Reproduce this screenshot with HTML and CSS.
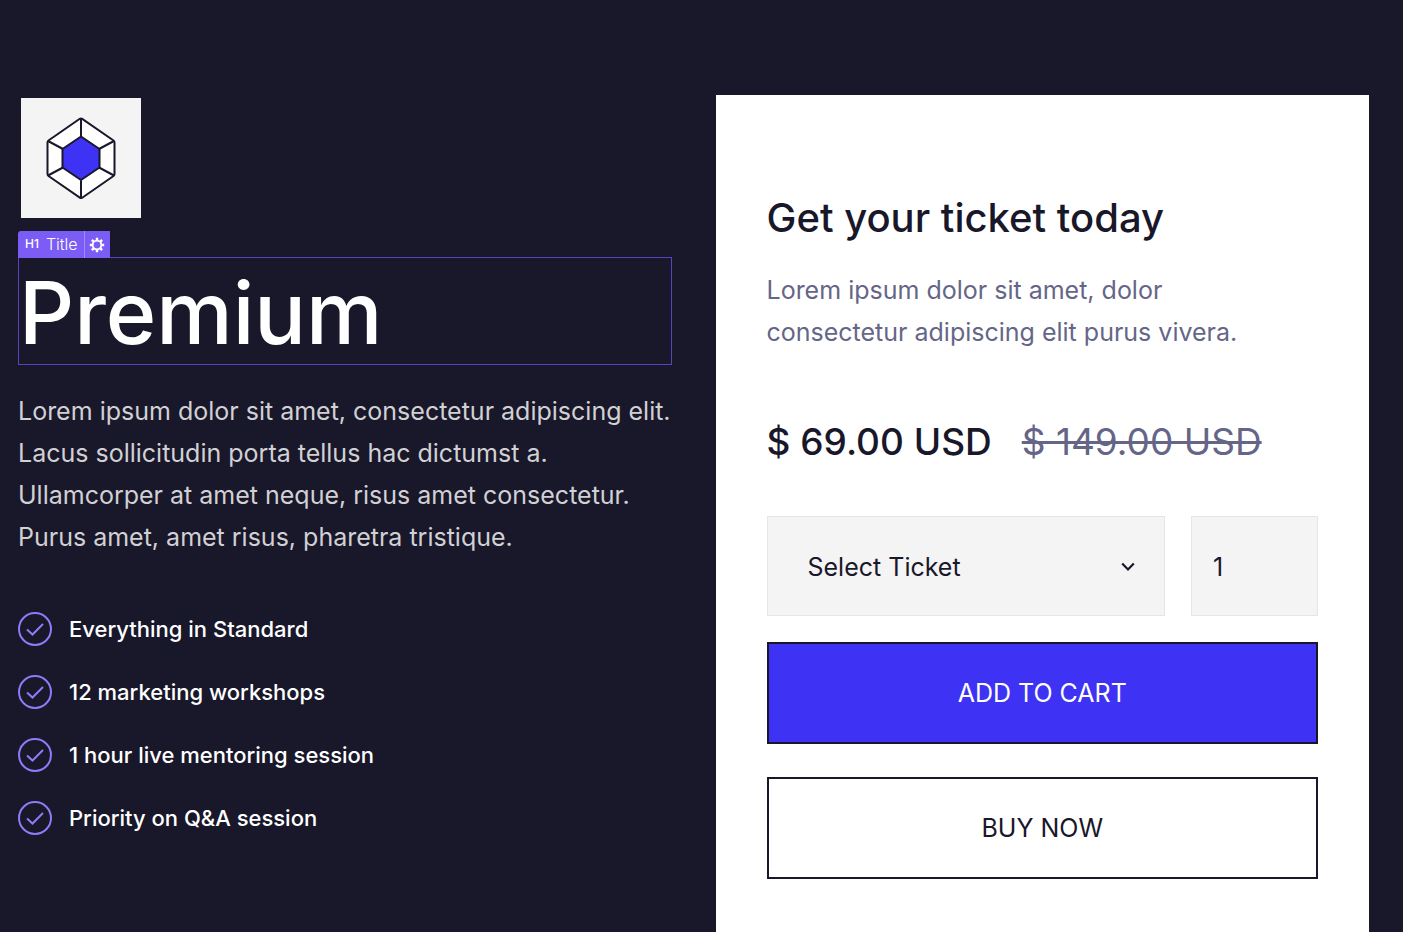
FILE: index.html
```html
<!DOCTYPE html>
<html lang="en">
  <head>
    <meta charset="UTF-8" />
    <meta name="viewport" content="width=device-width, initial-scale=1.0" />
    <title>Premium</title>
    <link rel="stylesheet" href="styles.css">
  </head>
  <body>
    <main class="ticket-page">
      <section class="plan">
        <div class="plan-logo">
          <svg width="72" height="84" viewBox="0 0 72 84" fill="none" stroke="#19172a" stroke-width="2" stroke-linejoin="round">
            <path d="M34.800 2.800Q36 2 37.200 2.800L68.500 24.500Q69.500 25.200 69.500 26.500V58Q69.500 59.300 68.500 60L37.200 81.700Q36 82.500 34.800 81.700L3.500 60Q2.500 59.300 2.500 58V26.500Q2.500 25.200 3.500 24.500Z" fill="#fff" />
            <path d="M36 2.500V20M69 25 54 33M69 59.500 54 51.500M36 82V64.500M3 59.500 18 51.500M3 25 18 33" />
            <path d="M36 20.500 54.500 33V51.500L36 64 17.500 51.500V33Z" fill="#3e32f5" />
          </svg>
        </div>

        <div class="selected">
          <div class="selected-tag">
            <span class="tag-name"><b class="tag-level">H1</b>Title</span>
            <button class="tag-settings" type="button" aria-label="Settings">
              <svg width="16" height="16" viewBox="0 0 16 16" fill="none" stroke="#fff">
                <circle cx="8" cy="8" r="4.300" stroke-width="1.800" />
                <path d="M8 .8V3.500M8 12.500V15.200M.8 8H3.500M12.500 8H15.200M2.900 2.900 4.800 4.800M11.200 11.200 13.100 13.100M2.900 13.100 4.800 11.200M11.200 4.800 13.100 2.900" stroke-width="2.400" />
              </svg>
            </button>
          </div>
          <h1 class="plan-title">Premium</h1>
        </div>

        <p class="plan-text">
          Lorem ipsum dolor sit amet, consectetur adipiscing elit.<br />
          Lacus sollicitudin porta tellus hac dictumst a.<br />
          Ullamcorper at amet neque, risus amet consectetur.<br />
          Purus amet, amet risus, pharetra tristique.
        </p>

        <ul class="features">
          <li class="feature">
            <svg class="check" viewBox="0 0 34 34"><circle cx="17" cy="17" r="16" /><path d="M9 17.500 14.500 22.500 25 12" /></svg>
            Everything in Standard
          </li>
          <li class="feature">
            <svg class="check" viewBox="0 0 34 34"><circle cx="17" cy="17" r="16" /><path d="M9 17.500 14.500 22.500 25 12" /></svg>
            12 marketing workshops
          </li>
          <li class="feature">
            <svg class="check" viewBox="0 0 34 34"><circle cx="17" cy="17" r="16" /><path d="M9 17.500 14.500 22.500 25 12" /></svg>
            1 hour live mentoring session
          </li>
          <li class="feature">
            <svg class="check" viewBox="0 0 34 34"><circle cx="17" cy="17" r="16" /><path d="M9 17.500 14.500 22.500 25 12" /></svg>
            Priority on Q&amp;A session
          </li>
        </ul>
      </section>

      <section class="card">
        <h2 class="card-title">Get your ticket today</h2>
        <p class="card-text">
          Lorem ipsum dolor sit amet, dolor<br />
          consectetur adipiscing elit purus vivera.
        </p>
        <div class="prices">
          <span class="price">$ 69.00 USD</span>
          <del class="old-price">$ 149.00 USD</del>
        </div>
        <form class="order">
          <div class="fields">
            <div class="select-wrap">
              <select class="field ticket" name="ticket" aria-label="Ticket">
                <option>Select Ticket</option>
              </select>
              <svg class="chevron" width="14" height="10" viewBox="0 0 14 10" fill="none" stroke="#19172a" stroke-width="2.200">
                <path d="M1.200 1.500 7 7.500 12.800 1.500" />
              </svg>
            </div>
            <input class="field quantity" type="number" name="quantity" value="1" min="1" aria-label="Quantity" />
          </div>
          <button class="btn btn-primary" type="submit">ADD TO CART</button>
          <button class="btn" type="button">BUY NOW</button>
        </form>
      </section>
    </main>
  </body>
</html>
```
FILE: styles.css
```css
* {
  box-sizing: border-box;
}

body {
  margin: 0;
  background-color: #19172a;
  color: #19172a;
  font-family: Inter, "Liberation Sans", sans-serif;
}

h1,
h2,
p,
ul {
  margin: 0;
  padding: 0;
  font-weight: 500;
}

.ticket-page {
  display: grid;
  grid-template-columns: 1fr 1fr;
  gap: 44px;
  min-height: 100vh;
  padding: 95px 34px 0 18px;
}

/* Left column */
.plan {
  padding-top: 3px;
}

.plan-logo {
  display: flex;
  align-items: center;
  justify-content: center;
  width: 120px;
  height: 120px;
  margin-left: 3px;
  background-color: #f4f4f4;
}

.selected {
  position: relative;
  margin-top: 39px;
  border: 1px solid #5b42bd;
}

/* Label above the selected element */
.selected-tag {
  position: absolute;
  left: -1px;
  bottom: 100%;
  display: flex;
  height: 27px;
  border-radius: 3px 0 0 0;
  background-color: #7b5cf5;
  color: #fff;
}

.tag-name {
  display: flex;
  align-items: center;
  gap: 7px;
  padding: 0 6px 2px 7px;
  font-size: 16px;
  font-weight: 300;
}

.tag-level {
  font-size: 12px;
  font-weight: 500;
}

.tag-settings {
  display: flex;
  align-items: center;
  justify-content: center;
  width: 26px;
  padding: 0;
  border: 0;
  border-left: 1px solid #a28cf9;
  background: none;
}

.plan-title {
  padding-top: 4px;
  color: #fff;
  font-size: 86px;
  line-height: 102px;
}

.plan-text {
  margin-top: 25px;
  color: #d1d1d4;
  font-size: 25px;
  font-weight: 400;
  line-height: 42px;
  white-space: nowrap;
}

.features {
  display: flex;
  flex-direction: column;
  gap: 29px;
  margin-top: 54px;
  list-style: none;
}

.feature {
  display: flex;
  align-items: center;
  gap: 17px;
  color: #fff;
  font-size: 22px;
  line-height: 34px;
}

.check {
  width: 34px;
  height: 34px;
  fill: none;
  stroke: #8c7cf7;
  stroke-width: 2;
}

/* Order card */
.card {
  padding: 97px 51px 52px;
  background-color: #fff;
}

.card-title {
  font-size: 40px;
  line-height: 52px;
}

.card-text {
  margin-top: 25px;
  color: #656687;
  font-size: 25px;
  font-weight: 400;
  line-height: 42px;
}

.prices {
  display: flex;
  gap: 30px;
  margin-top: 63px;
  font-size: 37px;
  line-height: 52px;
  white-space: nowrap;
}

.price {
  font-weight: 500;
}

.old-price {
  color: #656687;
}

.order {
  margin-top: 48px;
}

.fields {
  display: flex;
  gap: 26px;
  margin-bottom: 26px;
}

.select-wrap {
  position: relative;
  flex: 1;
}

.field {
  height: 100px;
  border: 1px solid #e5e5ea;
  border-radius: 0;
  background-color: #f4f4f4;
  color: #19172a;
  font-family: inherit;
  font-size: 25px;
  appearance: none;
}

.ticket {
  width: 100%;
  padding: 2px 60px 0 40px;
}

.chevron {
  position: absolute;
  top: 46px;
  right: 30px;
  pointer-events: none;
}

.quantity {
  width: 127px;
  padding: 2px 21px 0;
  appearance: textfield;
}

.btn {
  display: block;
  width: 100%;
  height: 102px;
  border: 2px solid #19172a;
  background-color: #fff;
  color: #19172a;
  font-family: inherit;
  font-size: 25px;
  cursor: pointer;
}

.btn-primary {
  margin-bottom: 33px;
  background-color: #3e32f5;
  color: #fff;
}
```
